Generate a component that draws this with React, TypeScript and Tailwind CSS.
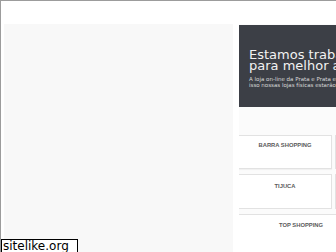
import React from "react";

export default function App() {
  return (
    <div className="relative w-[336px] h-[252px] overflow-hidden bg-white border-t border-l border-[#9c9c9c]" style={{ fontFamily: '"Liberation Sans", Arial, sans-serif' }}>
      <div className="h-[23px]" />
      <div className="flex h-[228px]">
        <div className="ml-[3px] w-[229px] bg-[#f8f8f8]" />
        <div className="ml-[6px] flex-1 flex flex-col overflow-hidden bg-[#fbfbfb]">
          <div className="mt-[1px] w-[130px] h-[82px] bg-[#3c3f46] pl-[10px] pt-[24px] shrink-0">
            <div className="text-[13px] leading-[11px] text-[#f2f2f2] whitespace-nowrap" style={{ fontFamily: '"DejaVu Sans", sans-serif' }}>
              Estamos trabalhando
              <br />
              para melhor atendê-lo
            </div>
            <div className="mt-[5px] text-[5.5px] leading-[6px] text-[#d8d8d8] whitespace-nowrap" style={{ fontFamily: '"DejaVu Sans", sans-serif' }}>
              A loja on-line da Prata e Prata está em manutenção, por
              <br />
              isso nossas lojas físicas estarão abertas
            </div>
          </div>
          <div className="mt-[28px] -ml-[1px] grid grid-cols-[94px_94px] gap-x-[3px] gap-y-[5px] w-[200px]">
            <div className="h-[34px] bg-white border border-[#e2e2e2] shadow-[0_1px_1px_rgba(0,0,0,0.04)] pt-[6px] text-center text-[5.8px] font-bold text-[#5a5a5a] leading-[7px]">BARRA SHOPPING</div>
            <div className="h-[34px] bg-white border border-[#e2e2e2]" />
            <div className="h-[35px] bg-white border border-[#e2e2e2] pt-[8px] text-center text-[5.8px] font-bold text-[#5a5a5a] leading-[7px]">TIJUCA</div>
            <div className="h-[35px] bg-white border border-[#e2e2e2]" />
            <div className="col-span-2 w-[126px] h-[50px] bg-white border border-[#e2e2e2] pt-[7px] text-center text-[5.8px] font-bold text-[#5a5a5a] leading-[7px]">TOP SHOPPING</div>
          </div>
        </div>
      </div>
      <div className="absolute left-0 top-[238px] w-[77px] h-[16px] bg-white border border-black pl-[1px] text-[12px] leading-[13px] text-black" style={{ fontFamily: '"DejaVu Sans", Verdana, sans-serif' }}>
        sitelike.org
      </div>
    </div>
  );
}
